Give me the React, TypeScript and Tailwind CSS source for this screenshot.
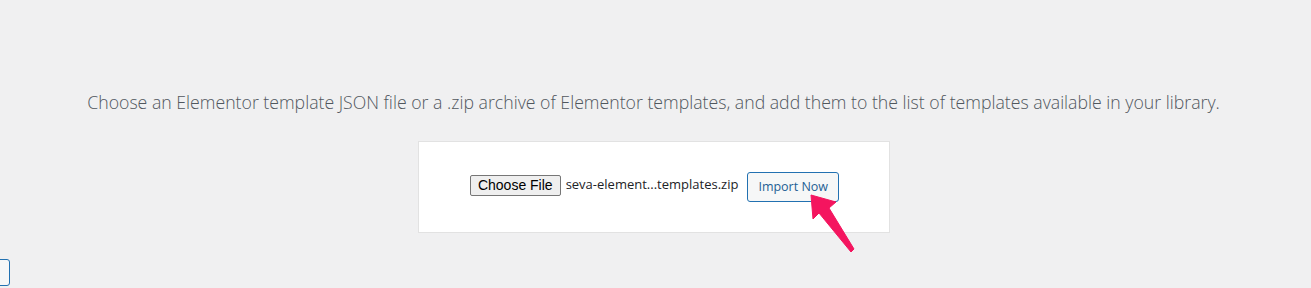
import React from "react";

export default function App() {
  return (
    <div className="relative w-[1311px] h-[288px] overflow-hidden bg-[#f0f0f1]" style={{ fontFamily: '"Open Sans", "Segoe UI", sans-serif' }}>
      <div className="flex flex-col items-center pr-[4px] pt-[90px]">
        <p className="text-[17.7px] leading-[24px] font-light text-[#50575e] whitespace-nowrap">
          Choose an Elementor template JSON file or a .zip archive of Elementor templates, and add them to the list of templates available in your library.
        </p>
        <div className="mt-[27px] w-[472px] h-[92px] bg-white border border-[#e2e2e2] flex items-center justify-center">
          <div className="flex items-center ml-[2px] mt-[-4px]">
            <button className="h-[21px] px-[7px] bg-[#efefef] border border-[#767676] rounded-[2px] text-[14px] leading-[18px] text-black" style={{ fontFamily: '"Liberation Sans", Arial, sans-serif' }}>
              Choose File
            </button>
            <span className="ml-[5px] text-[13px] text-[#1d2327]">seva-element...templates.zip</span>
            <button className="ml-[9px] h-[30px] px-[10px] bg-[#f6f7f7] border border-[#2271b1] rounded-[3px] text-[12.5px] text-[#1f5f94] mt-[4px]">
              Import Now
            </button>
          </div>
        </div>
      </div>
      <div className="absolute left-[-20px] top-[259px] w-[30px] h-[27px] bg-[#f6f7f7] border border-[#2271b1] rounded-[3px]" />
      <svg className="absolute left-0 top-0" width="1311" height="288" viewBox="0 0 1311 288">
        <path d="M811 195 L836 202 L829 208 L854 249 L851 252 L819 213 L813 219 Z" fill="#f4155f" strokeLinejoin="round" stroke="#f4155f" strokeWidth="1" />
      </svg>
    </div>
  );
}
